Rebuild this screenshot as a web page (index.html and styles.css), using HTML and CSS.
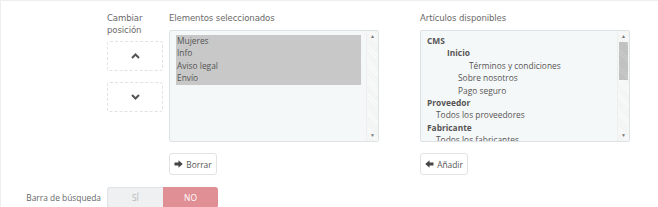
FILE: index.html
```html
<!DOCTYPE html>
<html lang="es">
<head>
<meta charset="utf-8">
<link rel="stylesheet" href="styles.css">
</head>
<body>
<div class="panel">
  <div class="row-top">
    <div class="col-move">
      <div class="heading">Cambiar<br>posición</div>
      <button class="move-btn up" type="button">
        <svg width="9" height="6" viewBox="0 0 9 6"><path d="M1 5 L4.5 1.5 L8 5" fill="none" stroke="#555" stroke-width="2"/></svg>
      </button>
      <button class="move-btn down" type="button">
        <svg width="9" height="6" viewBox="0 0 9 6"><path d="M1 1 L4.5 4.5 L8 1" fill="none" stroke="#555" stroke-width="2"/></svg>
      </button>
    </div>
    <div class="col-list">
      <div class="heading single">Elementos seleccionados</div>
      <div class="listbox">
        <div class="items">
          <div class="item sel">Mujeres</div>
          <div class="item sel">Info</div>
          <div class="item sel">Aviso legal</div>
          <div class="item sel">Envío</div>
        </div>
        <div class="scroll">
          <span class="arr">▲</span>
          <span class="track"></span>
          <span class="arr">▼</span>
        </div>
      </div>
      <button class="act-btn" type="button">
        <svg width="9" height="8" viewBox="0 0 9 8"><path d="M0.5 2.6 H4.5 V0.3 L8.7 4 L4.5 7.7 V5.4 H0.5 Z" fill="#444"/></svg>
        Borrar
      </button>
    </div>
    <div class="col-list right">
      <div class="heading single">Artículos disponibles</div>
      <div class="listbox">
        <div class="items">
          <div class="item b l0">CMS</div>
          <div class="item b l2">Inicio</div>
          <div class="item l4">Términos y condiciones</div>
          <div class="item l3">Sobre nosotros</div>
          <div class="item l3">Pago seguro</div>
          <div class="item b l0">Proveedor</div>
          <div class="item l1">Todos los proveedores</div>
          <div class="item b l0">Fabricante</div>
          <div class="item l1">Todos los fabricantes</div>
        </div>
        <div class="scroll">
          <span class="arr">▲</span>
          <span class="track"><span class="thumb"></span></span>
          <span class="arr">▼</span>
        </div>
      </div>
      <button class="act-btn" type="button">
        <svg width="9" height="8" viewBox="0 0 9 8"><path d="M8.5 2.6 H4.5 V0.3 L0.3 4 L4.5 7.7 V5.4 H8.5 Z" fill="#444"/></svg>
        Añadir
      </button>
    </div>
  </div>
  <div class="row-bottom">
    <label class="field-label">Barra de búsqueda</label>
    <div class="toggle">
      <span class="opt yes">SÍ</span>
      <span class="opt no">NO</span>
    </div>
  </div>
</div>
</body>
</html>
```

FILE: styles.css
```css
* { box-sizing: border-box; }
html, body { margin: 0; padding: 0; background: #fff; }
body {
  width: 658px;
  height: 207px;
  overflow: hidden;
  font-family: "Open Sans", "Liberation Sans", sans-serif;
  color: #555;
}
.panel {
  width: 658px;
  height: 207px;
  border-top: 1px solid #eceeef;
  border-left: 1px solid #eceeef;
  padding-top: 11px;
}
.row-top {
  display: flex;
  padding-left: 106px;
}
.col-move {
  width: 56px;
  display: flex;
  flex-direction: column;
}
.heading {
  font-family: "DejaVu Sans Condensed", "Liberation Sans Narrow", "DejaVu Sans", sans-serif;
  font-stretch: condensed;
  font-size: 9.5px;
  line-height: 12px;
  color: #6a6a6a;
  height: 18px;
  letter-spacing: -0.1px;
}
.col-move .heading { height: 29px; }
.move-btn {
  width: 56px;
  height: 30px;
  background: #fff;
  border: 1px dashed #e2e2e2;
  border-radius: 3px;
  padding: 0;
  display: flex;
  align-items: center;
  justify-content: center;
}
.move-btn.down { margin-top: 11px; }
.col-list {
  margin-left: 6px;
  width: 210px;
  display: flex;
  flex-direction: column;
}
.col-list.right { margin-left: 41px; }
.listbox {
  height: 112px;
  border: 1px solid #dde2e4;
  border-radius: 2px;
  background: #f5f8f9;
  display: flex;
  overflow: hidden;
}
.items {
  flex: 1;
  padding: 4px 4px 0 6px;
  overflow: hidden;
}
.item {
  font-size: 8.4px;
  line-height: 12.4px;
  height: 12.4px;
  white-space: nowrap;
  color: #555;
}
.item.sel { background: #c8c8c8; color: #555; padding-left: 1px; margin-right: 1px; }
.item.b { font-weight: 700; color: #555; }
.l0 { padding-left: 0; }
.l1 { padding-left: 9px; }
.l2 { padding-left: 20px; }
.l3 { padding-left: 31px; }
.l4 { padding-left: 42px; }
.scroll {
  width: 12px;
  display: flex;
  flex-direction: column;
  align-items: stretch;
  background: repeating-linear-gradient(45deg, #f1f2f2 0 1px, #fafafa 1px 2px);
  border-left: 1px solid #eef0f0;
}
.arr {
  height: 11px;
  font-size: 5px;
  line-height: 11px;
  text-align: center;
  color: #777;
}
.track { flex: 1; display: flex; flex-direction: column; }
.thumb {
  height: 38px;
  background: repeating-linear-gradient(45deg, #bdbdbd 0 1px, #c9c9c9 1px 2px);
  margin: 0 1px;
}
.act-btn {
  margin-top: 11px;
  width: 48px;
  height: 22px;
  background: #fff;
  border: 1px solid #e3e3e3;
  border-radius: 3px;
  display: flex;
  align-items: center;
  justify-content: center;
  gap: 3px;
  font-family: "Open Sans", "Liberation Sans", sans-serif;
  font-size: 8.4px;
  color: #555;
  padding: 0 2px;
}
.row-bottom {
  display: flex;
  align-items: center;
  margin-top: 12px;
}
.field-label {
  width: 106px;
  padding-right: 6px;
  text-align: right;
  font-size: 8.4px;
  color: #666;
}
.toggle {
  display: flex;
  width: 111px;
  height: 21px;
}
.opt {
  flex: 1;
  display: flex;
  align-items: center;
  justify-content: center;
  font-size: 8.4px;
}
.opt.yes {
  background: #eef0f1;
  border: 1px solid #e0e3e4;
  border-right: none;
  border-radius: 3px 0 0 3px;
  color: #b7b7b7;
}
.opt.no {
  background: #e08f95;
  color: #fff;
  border-radius: 0 3px 3px 0;
}
```
